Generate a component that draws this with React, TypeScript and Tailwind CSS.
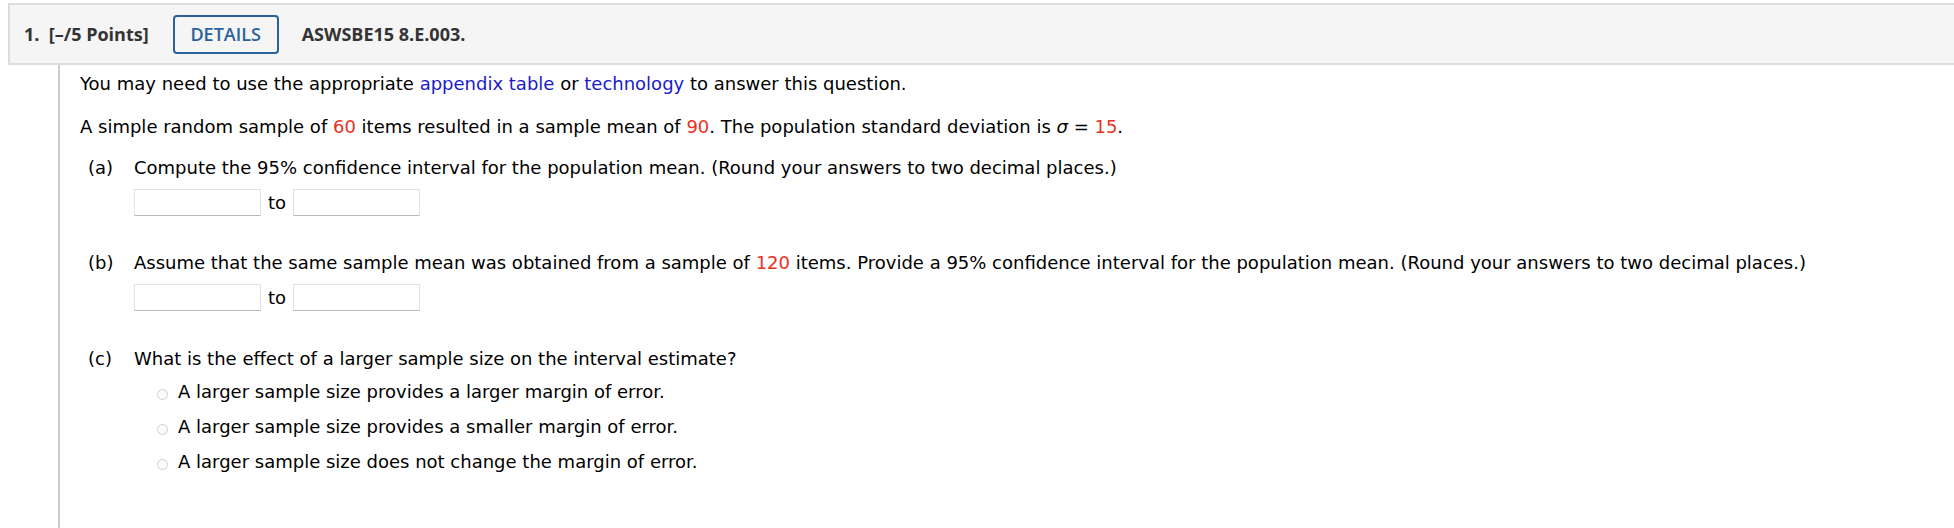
import React from 'react'

const body = { fontFamily: '"DejaVu Sans", Verdana, sans-serif' }
const head = { fontFamily: '"Open Sans", "Liberation Sans", sans-serif' }

function Red({ children }: { children: React.ReactNode }) {
  return <span className="text-[#e8321e]">{children}</span>
}

function Blue({ children }: { children: React.ReactNode }) {
  return <a className="text-[#1a1acc] cursor-pointer">{children}</a>
}

function Box() {
  return <span className="inline-block w-[127px] h-[27px] border border-[#e2e2e2] border-b-[#b8b8b8] bg-white" />
}

function Range() {
  return (
    <div className="flex items-center ml-[54px]">
      <Box />
      <span className="w-[32px] text-center">to</span>
      <Box />
    </div>
  )
}

function Part({ tag, children }: { tag: string; children: React.ReactNode }) {
  return (
    <div className="flex ml-[8px] leading-[22px]">
      <span className="w-[46px] shrink-0">{tag}</span>
      <span>{children}</span>
    </div>
  )
}

function Option({ label }: { label: string }) {
  return (
    <label className="flex items-center ml-[77px] leading-[22px]">
      <span className="w-[11px] h-[11px] rounded-full border border-[#cfcfcf] bg-[#fbfbfb] mt-[5px]" />
      <span className="ml-[10px]">{label}</span>
    </label>
  )
}

export default function App() {
  return (
    <div className="w-[1954px] h-[528px] bg-white pt-[3px] overflow-hidden">
      <div
        className="ml-[8px] h-[62px] flex items-center border-2 border-r-0 border-[#dddddd] bg-[#f5f5f5] pl-[14px]"
        style={head}
      >
        <span className="text-[18px] font-bold text-[#333]">1.&nbsp; [–/5 Points]</span>
        <button className="ml-[24px] h-[39px] w-[106px] rounded-[4px] border-2 border-[#2a6299] text-[18px] font-semibold text-[#2a6299]">
          DETAILS
        </button>
        <span className="ml-[23px] text-[18px] font-bold text-[#333]">ASWSBE15 8.E.003.</span>
      </div>

      <div className="ml-[58px] border-l-2 border-[#cccccc] h-[465px] pl-[20px] pt-[8px] text-[18px] text-black" style={body}>
        <p className="leading-[22px]">
          You may need to use the appropriate <Blue>appendix table</Blue> or <Blue>technology</Blue> to answer this question.
        </p>
        <p className="leading-[22px] mt-[21px]">
          A simple random sample of <Red>60</Red> items resulted in a sample mean of <Red>90</Red>. The population standard deviation is <i>σ</i> = <Red>15</Red>.
        </p>

        <div className="mt-[19px]">
          <Part tag="(a)">Compute the 95% confidence interval for the population mean. (Round your answers to two decimal places.)</Part>
          <div className="mt-[10px]">
            <Range />
          </div>
        </div>

        <div className="mt-[36px]">
          <Part tag="(b)">
            Assume that the same sample mean was obtained from a sample of <Red>120</Red> items. Provide a 95% confidence interval for the population mean. (Round your answers to two decimal places.)
          </Part>
          <div className="mt-[10px]">
            <Range />
          </div>
        </div>

        <div className="mt-[37px]">
          <Part tag="(c)">What is the effect of a larger sample size on the interval estimate?</Part>
          <div className="mt-[11px] flex flex-col gap-[13px]">
            <Option label="A larger sample size provides a larger margin of error." />
            <Option label="A larger sample size provides a smaller margin of error." />
            <Option label="A larger sample size does not change the margin of error." />
          </div>
        </div>
      </div>
    </div>
  )
}
